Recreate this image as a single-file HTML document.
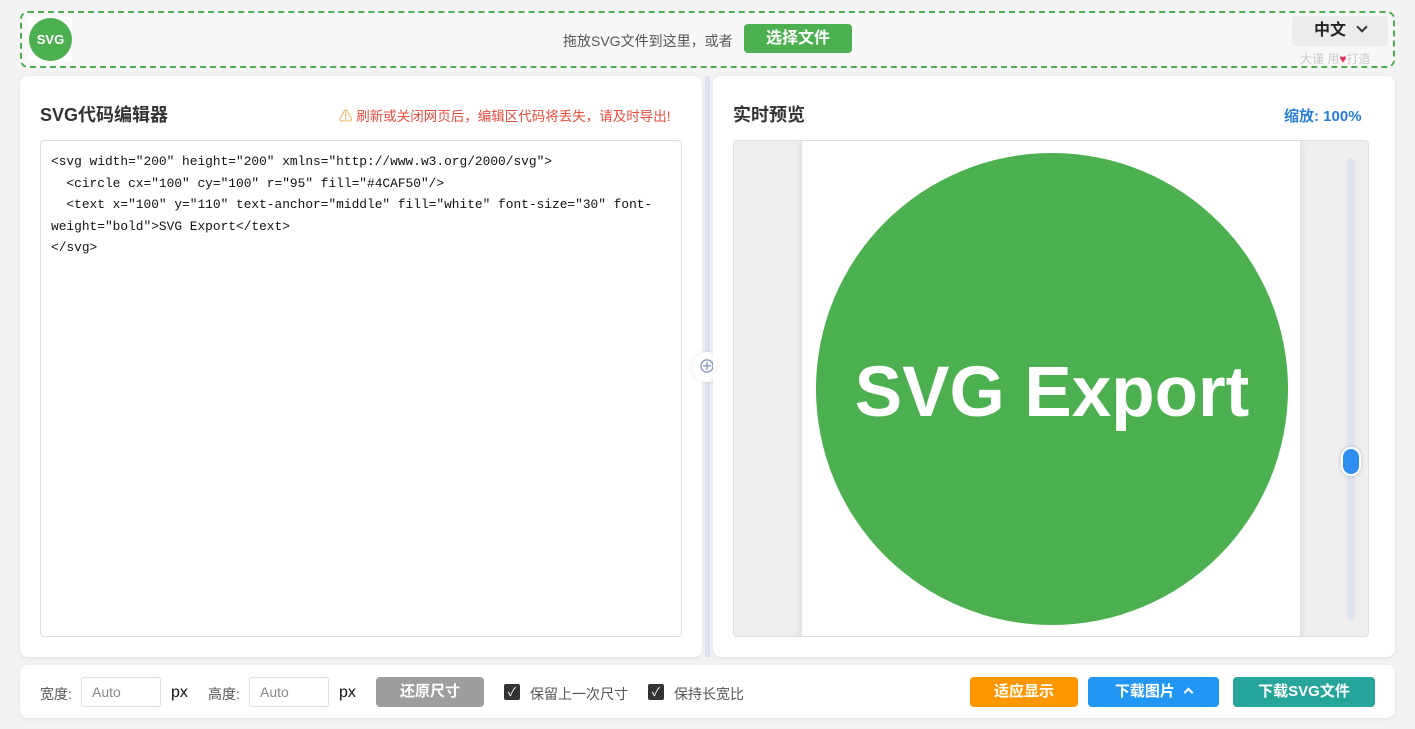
<!DOCTYPE html>
<html><head><meta charset="utf-8"><style>
*{box-sizing:border-box;margin:0;padding:0}
body{width:1415px;height:729px;background:#f3f3f3;font-family:"Liberation Sans","Noto Sans CJK SC",sans-serif;position:relative;overflow:hidden;color:#333}
.abs{position:absolute}
.hdr{left:20px;top:11px;width:1375px;height:57px;border:2px dashed #4caf50;border-radius:8px;background:#f8f8f8}
.panel{background:#fff;border-radius:8px;box-shadow:0 1px 4px rgba(0,0,0,.08)}
.btn{color:#fff;font-weight:bold;font-size:15px;border-radius:4px;text-align:center}
.mono{font-family:"Liberation Mono","Noto Sans CJK SC",monospace;font-size:12.85px;line-height:21.5px;color:#111}
.inp{border:1px solid #ddd;border-radius:3px;height:30px;width:80px;font-size:14px;color:#888;padding:6px 10px}
.cb{width:16px;height:16px;background:#333;border-radius:2px;color:#fff;font-size:12px;text-align:center;line-height:16px}
</style></head><body>
<div class="abs hdr"></div>
<div class="abs" style="left:28px;top:17px;width:44px;height:44px;background:#fff"></div>
<div class="abs" style="left:29px;top:18px;width:43px;height:43px;border-radius:50%;background:#4caf50;color:#fff;font-weight:bold;font-size:13px;text-align:center;line-height:43px">SVG</div>
<div class="abs" style="left:563px;top:31px;font-size:14px;color:#555">拖放SVG文件到这里，或者</div>
<div class="abs btn" style="left:744px;top:24px;width:108px;height:29px;line-height:29px;background:#4caf50;font-size:16px">选择文件</div>
<div class="abs" style="left:1292px;top:16px;width:96px;height:30px;background:#ececec;border-radius:4px;font-size:16px;font-weight:bold;line-height:30px;padding-left:22px;color:#222">中文 <span style="display:inline-block;width:8px;height:8px;border-right:2px solid #333;border-bottom:2px solid #333;transform:rotate(45deg);margin:0 0 4px 8px"></span></div>
<div class="abs" style="left:1300px;top:50px;font-size:12px;color:#ccc">大谨 用<span style="color:#e8305a">♥</span>打造</div>

<div class="abs panel" style="left:20px;top:76px;width:682px;height:581px"></div>
<div class="abs" style="left:40px;top:101px;font-size:18px;font-weight:bold;color:#333">SVG代码编辑器</div>
<div class="abs" style="left:339px;top:105px;font-size:13.5px;color:#e74c3c"><span style="color:#f0a030">⚠</span> 刷新或关闭网页后，编辑区代码将丢失，请及时导出!</div>
<div class="abs mono" style="left:40px;top:140px;width:642px;height:497px;border:1px solid #ddd;border-radius:4px;padding:10px 10px">&lt;svg width="200" height="200" xmlns="http://www.w3.org/2000/svg"&gt;<br>&nbsp;&nbsp;&lt;circle cx="100" cy="100" r="95" fill="#4CAF50"/&gt;<br>&nbsp;&nbsp;&lt;text x="100" y="110" text-anchor="middle" fill="white" font-size="30" font-<br>weight="bold"&gt;SVG Export&lt;/text&gt;<br>&lt;/svg&gt;</div>

<div class="abs" style="left:705px;top:76px;width:5px;height:581px;background:#dfe2ec"></div>
<div class="abs" style="left:692px;top:352px;width:30px;height:30px;border-radius:50%;background:#fff;box-shadow:0 0 4px rgba(0,0,0,.1);color:#8090b8;font-size:18px;text-align:center;line-height:30px">⊕</div>

<div class="abs panel" style="left:713px;top:76px;width:682px;height:581px"></div>
<div class="abs" style="left:733px;top:101px;font-size:18px;font-weight:bold;color:#333">实时预览</div>
<div class="abs" style="left:1284px;top:105px;font-size:15px;font-weight:bold;color:#2a7ed8">缩放: 100%</div>
<div class="abs" style="left:733px;top:140px;width:636px;height:497px;background:#eee;border:1px solid #ddd;border-radius:4px;overflow:hidden">
 <div class="abs" style="left:68px;top:0;width:498px;height:497px;background:#fff;box-shadow:0 0 8px rgba(0,0,0,.12)"></div>
 <svg class="abs" style="left:68px;top:0" width="498" height="497"><circle cx="250" cy="248" r="236" fill="#4caf50"/><text x="250" y="275" text-anchor="middle" fill="#fff" font-size="71" font-weight="bold" font-family="Liberation Sans, sans-serif">SVG Export</text></svg>
 <div class="abs" style="left:613px;top:17px;width:8px;height:463px;border-radius:4px;background:#dfe5ef"></div>
 <div class="abs" style="left:607px;top:306px;width:20px;height:29px;border-radius:10px;background:#2f8ff0;border:2px solid #fff;box-shadow:0 0 4px rgba(0,0,0,.2)"></div>
</div>

<div class="abs panel" style="left:20px;top:665px;width:1375px;height:53px"></div>
<div class="abs" style="left:40px;top:684px;font-size:14px;color:#555">宽度:</div>
<div class="abs inp" style="left:81px;top:677px">Auto</div>
<div class="abs" style="left:171px;top:684px;font-size:16px;color:#111">px</div>
<div class="abs" style="left:208px;top:684px;font-size:14px;color:#555">高度:</div>
<div class="abs inp" style="left:249px;top:677px">Auto</div>
<div class="abs" style="left:339px;top:684px;font-size:16px;color:#111">px</div>
<div class="abs btn" style="left:376px;top:677px;width:108px;height:30px;line-height:30px;background:#9e9e9e">还原尺寸</div>
<div class="abs cb" style="left:504px;top:684px">✓</div>
<div class="abs" style="left:530px;top:684px;font-size:14px;color:#555">保留上一次尺寸</div>
<div class="abs cb" style="left:648px;top:684px">✓</div>
<div class="abs" style="left:674px;top:684px;font-size:14px;color:#555">保持长宽比</div>
<div class="abs btn" style="left:970px;top:677px;width:108px;height:30px;line-height:30px;background:#ff9800">适应显示</div>
<div class="abs btn" style="left:1088px;top:677px;width:131px;height:30px;line-height:30px;background:#2196f3">下载图片 <span style="display:inline-block;width:7px;height:7px;border-left:2px solid #fff;border-top:2px solid #fff;transform:rotate(45deg);margin:0 0 0 6px"></span></div>
<div class="abs btn" style="left:1233px;top:677px;width:142px;height:30px;line-height:30px;background:#26a69a">下载SVG文件</div>
</body></html>
